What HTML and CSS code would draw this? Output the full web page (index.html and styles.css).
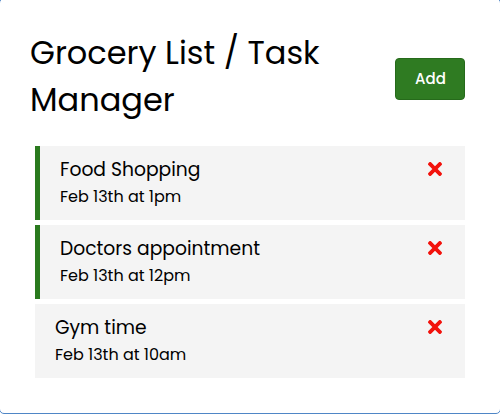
FILE: index.html
```html
<!DOCTYPE html>
<html>
<head>
<meta charset="utf-8">
<link rel="stylesheet" href="styles.css">
</head>
<body>
<div class="container">
  <header class="header">
    <h1 class="title">Grocery List / Task Manager</h1>
    <button class="btn">Add</button>
  </header>
  <div class="task reminder">
    <h3 class="task-title">Food Shopping
      <svg class="del" viewBox="0 80 352 352"><path d="M242.72 256l100.07-100.07c12.28-12.28 12.28-32.19 0-44.48l-22.24-22.24c-12.28-12.28-32.19-12.28-44.48 0L176 189.28 75.93 89.21c-12.28-12.28-32.19-12.28-44.48 0L9.21 111.45c-12.28 12.28-12.28 32.19 0 44.48L109.28 256 9.21 356.07c-12.28 12.280-12.28 32.19 0 44.48l22.24 22.24c12.28 12.28 32.2 12.28 44.48 0L176 322.72l100.07 100.07c12.28 12.28 32.2 12.28 44.48 0l22.24-22.24c12.28-12.28 12.28-32.19 0-44.48L242.72 256z"/></svg>
    </h3>
    <p class="task-date">Feb 13th at 1pm</p>
  </div>
  <div class="task reminder">
    <h3 class="task-title">Doctors appointment
      <svg class="del" viewBox="0 80 352 352"><path d="M242.72 256l100.07-100.07c12.28-12.28 12.28-32.19 0-44.48l-22.24-22.24c-12.28-12.28-32.19-12.28-44.48 0L176 189.28 75.93 89.21c-12.28-12.28-32.19-12.28-44.48 0L9.21 111.45c-12.28 12.28-12.28 32.19 0 44.48L109.28 256 9.21 356.07c-12.28 12.280-12.28 32.19 0 44.48l22.24 22.24c12.28 12.28 32.2 12.28 44.48 0L176 322.72l100.07 100.07c12.28 12.28 32.2 12.28 44.48 0l22.24-22.24c12.28-12.28 12.28-32.19 0-44.48L242.72 256z"/></svg>
    </h3>
    <p class="task-date">Feb 13th at 12pm</p>
  </div>
  <div class="task">
    <h3 class="task-title">Gym time
      <svg class="del" viewBox="0 80 352 352"><path d="M242.72 256l100.07-100.07c12.28-12.28 12.28-32.19 0-44.48l-22.24-22.24c-12.28-12.28-32.19-12.28-44.48 0L176 189.28 75.93 89.21c-12.28-12.28-32.19-12.28-44.48 0L9.21 111.45c-12.28 12.28-12.28 32.19 0 44.48L109.28 256 9.21 356.07c-12.28 12.280-12.28 32.19 0 44.48l22.24 22.24c12.28 12.28 32.2 12.28 44.48 0L176 322.72l100.07 100.07c12.28 12.28 32.2 12.28 44.48 0l22.24-22.24c12.28-12.28 12.28-32.19 0-44.48L242.72 256z"/></svg>
    </h3>
    <p class="task-date">Feb 13th at 10am</p>
  </div>
</div>
</body>
</html>
```
FILE: styles.css
```css
* { box-sizing: border-box; }
html, body { margin: 0; padding: 0; background: #fff; }
body {
  font-family: "Poppins", "Open Sans", sans-serif;
  color: #000;
  overflow: hidden;
}
.container {
  margin: -2px -1px 0 -1px;
  border: 1px solid #4f86c6;
  border-radius: 5px;
  padding: 30px;
  overflow: auto;
}
.header {
  display: flex;
  justify-content: space-between;
  align-items: center;
  margin-bottom: 23px;
}
.title {
  margin: 0;
  font-size: 32px;
  font-weight: 400;
  line-height: 47px;
}
.btn {
  display: inline-block;
  background: #2f7b22;
  color: #fff;
  border: 1px solid #266a1b;
  padding: 9px 19px;
  margin: 10px 5px 5px;
  border-radius: 4px;
  font-family: inherit;
  font-size: 15px;
  font-weight: 500;
  line-height: 22px;
  width: 70px;
  height: 42px;
}
.task {
  background: #f4f4f4;
  margin: 5px;
  padding: 10px 20px;
}
.task.reminder { border-left: 5px solid #2a7a1e; }
.task-title {
  margin: 0;
  display: flex;
  align-items: center;
  justify-content: space-between;
  font-size: 18.72px;
  font-weight: 400;
  line-height: 28px;
}
.del {
  width: 14px;
  height: 14px;
  fill: #f2120c;
  margin-right: 3px;
  margin-top: -2px;
}
.task-date {
  margin: 0;
  font-size: 16px;
  line-height: 26px;
}
```
